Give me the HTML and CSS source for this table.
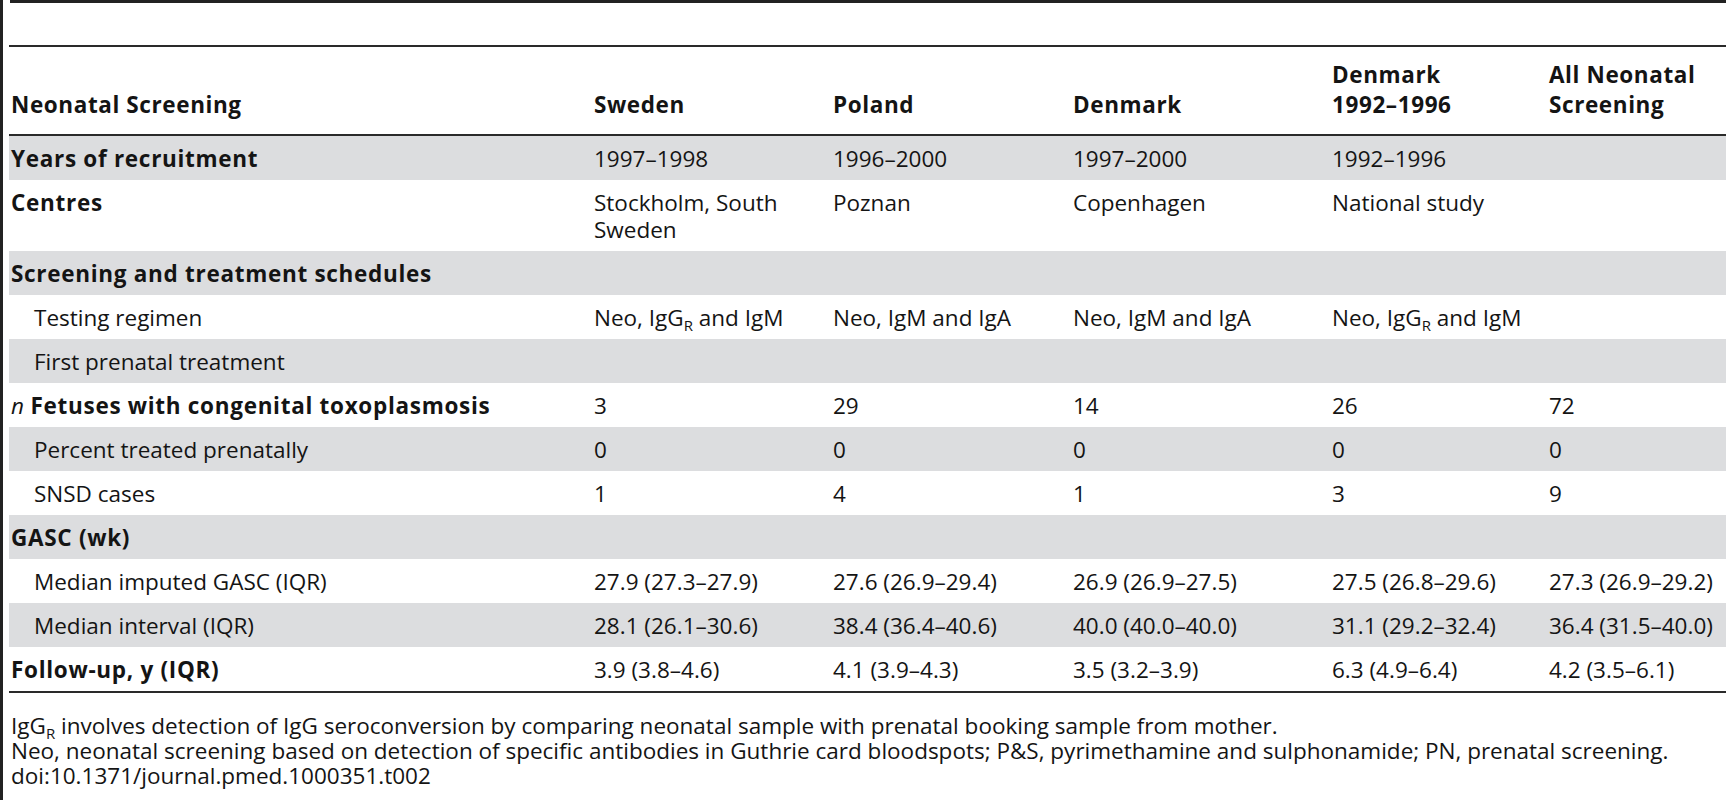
FILE: index.html
```html
<!DOCTYPE html>
<html lang="en">
<head>
<meta charset="utf-8">
<title>Table 2</title>
<link rel="stylesheet" href="styles.css">
</head>
<body>
<div class="page">
  <div class="frame">
    <div class="topbar"></div>
    <table class="data">
      <colgroup>
        <col class="c-label">
        <col class="c-se">
        <col class="c-pl">
        <col class="c-dk">
        <col class="c-dk92">
        <col class="c-all">
      </colgroup>
      <thead>
        <tr>
          <th class="first">Neonatal Screening</th>
          <th>Sweden</th>
          <th>Poland</th>
          <th>Denmark</th>
          <th>Denmark<br>1992–1996</th>
          <th>All Neonatal<br>Screening</th>
        </tr>
      </thead>
      <tbody>
        <tr class="shade">
          <td class="first b">Years of recruitment</td>
          <td>1997–1998</td><td>1996–2000</td><td>1997–2000</td><td>1992–1996</td><td></td>
        </tr>
        <tr>
          <td class="first b">Centres</td>
          <td>Stockholm, South<br>Sweden</td><td>Poznan</td><td>Copenhagen</td><td>National study</td><td></td>
        </tr>
        <tr class="shade">
          <td class="first b">Screening and treatment schedules</td>
          <td></td><td></td><td></td><td></td><td></td>
        </tr>
        <tr>
          <td class="first ind">Testing regimen</td>
          <td>Neo, IgG<sub>R</sub> and IgM</td><td>Neo, IgM and IgA</td><td>Neo, IgM and IgA</td><td>Neo, IgG<sub>R</sub> and IgM</td><td></td>
        </tr>
        <tr class="shade">
          <td class="first ind">First prenatal treatment</td>
          <td></td><td></td><td></td><td></td><td></td>
        </tr>
        <tr>
          <td class="first b"><i class="it">n</i> Fetuses with congenital toxoplasmosis</td>
          <td>3</td><td>29</td><td>14</td><td>26</td><td>72</td>
        </tr>
        <tr class="shade">
          <td class="first ind">Percent treated prenatally</td>
          <td>0</td><td>0</td><td>0</td><td>0</td><td>0</td>
        </tr>
        <tr>
          <td class="first ind">SNSD cases</td>
          <td>1</td><td>4</td><td>1</td><td>3</td><td>9</td>
        </tr>
        <tr class="shade">
          <td class="first b">GASC (wk)</td>
          <td></td><td></td><td></td><td></td><td></td>
        </tr>
        <tr>
          <td class="first ind">Median imputed GASC (IQR)</td>
          <td>27.9 (27.3–27.9)</td><td>27.6 (26.9–29.4)</td><td>26.9 (26.9–27.5)</td><td>27.5 (26.8–29.6)</td><td>27.3 (26.9–29.2)</td>
        </tr>
        <tr class="shade">
          <td class="first ind">Median interval (IQR)</td>
          <td>28.1 (26.1–30.6)</td><td>38.4 (36.4–40.6)</td><td>40.0 (40.0–40.0)</td><td>31.1 (29.2–32.4)</td><td>36.4 (31.5–40.0)</td>
        </tr>
        <tr>
          <td class="first b">Follow-up, y (IQR)</td>
          <td>3.9 (3.8–4.6)</td><td>4.1 (3.9–4.3)</td><td>3.5 (3.2–3.9)</td><td>6.3 (4.9–6.4)</td><td>4.2 (3.5–6.1)</td>
        </tr>
      </tbody>
    </table>
    <div class="notes">
      <p>IgG<sub>R</sub> involves detection of IgG seroconversion by comparing neonatal sample with prenatal booking sample from mother.</p>
      <p>Neo, neonatal screening based on detection of specific antibodies in Guthrie card bloodspots; P&amp;S, pyrimethamine and sulphonamide; PN, prenatal screening.</p>
      <p>doi:10.1371/journal.pmed.1000351.t002</p>
    </div>
  </div>
</div>
</body>
</html>
```

FILE: styles.css
```css
html, body {
  margin: 0;
  padding: 0;
  background: #ffffff;
}

body {
  font-family: "Open Sans", "Noto Sans", sans-serif;
  font-size: 22.5px;
  color: #141414;
  overflow: hidden;
}

.page {
  border-left: 3px solid #222222;
  min-height: 800px;
  padding-left: 6px;
  box-sizing: border-box;
}

.frame {
  display: flex;
  flex-direction: column;
}

.topbar {
  height: 3px;
  background: #222222;
  margin-left: 1px;
}

.data {
  margin-top: 42px;
  width: 1717px;
  border-collapse: collapse;
  table-layout: fixed;
  border-top: 2px solid #2a2a2a;
  border-bottom: 2px solid #2a2a2a;
}

.c-label { width: 585px; }
.c-se { width: 239px; }
.c-pl { width: 240px; }
.c-dk { width: 259px; }
.c-dk92 { width: 217px; }
.c-all { width: 177px; }

.data th {
  font-weight: 700;
  letter-spacing: 0.6px;
  text-align: left;
  vertical-align: bottom;
  line-height: 30px;
  padding: 13px 0 14px 0;
  border-bottom: 2px solid #2a2a2a;
  white-space: nowrap;
}

.data td {
  text-align: left;
  vertical-align: top;
  line-height: 27px;
  padding: 9px 0 8px 0;
  white-space: nowrap;
}

.data .first {
  padding-left: 2px;
}

.data td.ind {
  padding-left: 25px;
}

.data td.b {
  font-weight: 700;
  letter-spacing: 0.7px;
}

.it {
  font-weight: 400;
  font-style: italic;
  letter-spacing: 0;
}

.shade td {
  background: #dcdddf;
}

sub {
  font-size: 15px;
  line-height: 0;
  vertical-align: -5px;
}

.notes {
  padding: 20px 0 0 2px;
}

.notes p {
  margin: 0;
  line-height: 25px;
}
```
